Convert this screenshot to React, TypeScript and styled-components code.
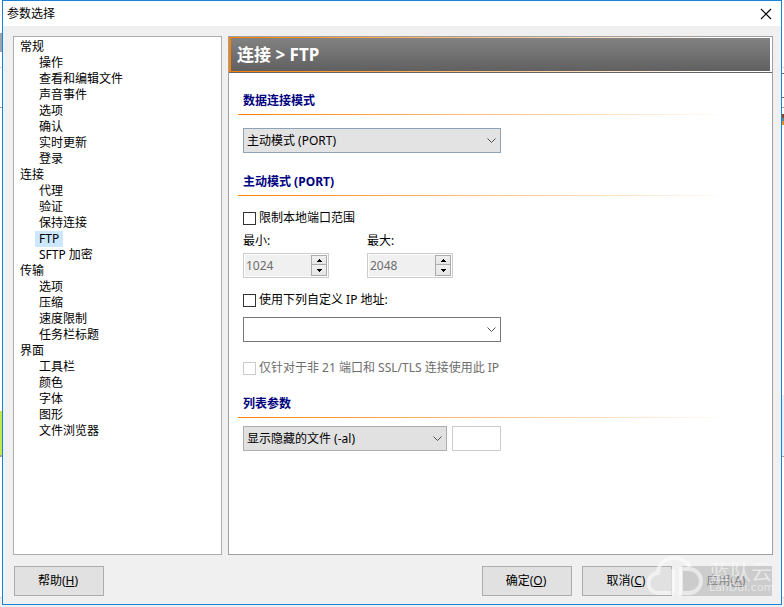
import React, { useState } from "react";
import styled, { createGlobalStyle } from "styled-components";

const Global = createGlobalStyle`
  * { box-sizing: border-box; }
  html, body, #root { height: 100%; margin: 0; }
  body, button, input, select {
    font-family: "Noto Sans", "Noto Sans CJK SC", sans-serif;
    font-size: 12px;
    line-height: 16px;
    color: #000;
  }
  body { background: #fff; overflow: hidden; }
`;

const Desktop = styled.div`
  min-height: 100vh;
  display: grid;
  padding: 0 2px 2px;
  background:
    linear-gradient(
      #fff 33px, #9aa5b0 33px 52px, #fff 52px 67px, #d8d8d8 67px 68px, #fff 68px 107px,
      #a0a0a0 107px 108px, #fff 108px 411px, #c4e84c 411px 455px, #a0a0a0 455px 457px,
      #fff 457px 597px, #d8d8d8 597px 598px, #f0f0f0 598px
    ) left / 2px 100% no-repeat,
    linear-gradient(
      #fff 67px, #d8d8d8 67px 68px, #fff 68px 73px, #707070 73px 74px, #fff 74px 97px,
      #707070 97px 98px, #fff 98px 107px, #a0a0a0 107px 108px, #fff 108px 114px,
      #8a4a20 114px 118px, #5b87a8 118px 121px, #e08a28 121px 125px, #fff 125px 395px,
      #e8f0f8 395px 456px, #a0a0a0 456px 457px, #fff 457px 597px, #d8d8d8 597px 598px, #f0f0f0 598px
    ) right / 2px 100% no-repeat,
    #f0f0f0;
`;

const Dialog = styled.main`
  display: flex;
  flex-direction: column;
  background: #f0f0f0;
  border: 1px solid #1883d7;
`;

const TitleBar = styled.header`
  display: flex;
  align-items: center;
  justify-content: space-between;
  height: 25px;
  padding: 0 7px 0 4px;
  background: #fff;
`;

const Title = styled.h1`
  margin: 0;
  font-size: 12px;
  font-weight: 400;
`;

const CloseButton = styled.button`
  display: grid;
  place-items: center;
  width: 16px;
  height: 16px;
  padding: 0;
  border: 0;
  background: none;
`;

const Body = styled.div`
  flex: 1;
  display: grid;
  grid-template-columns: 209px 1fr;
  gap: 6px;
  padding: 10px 8px 0 10px;
`;

const Sidebar = styled.nav`
  padding: 2px 5px;
  background: #fff;
  border: 1px solid #abadb3;
`;

const Group = styled.div`
  display: flex;
  flex-direction: column;
  align-items: flex-start;
`;

const TreeItem = styled.a<{ $child?: boolean; $active?: boolean }>`
  height: 16px;
  margin-left: ${(p) => (p.$child ? 16 : 0)}px;
  padding: 0 ${(p) => (p.$child ? 4 : 1)}px;
  color: #000;
  text-decoration: none;
  white-space: nowrap;
  background: ${(p) => (p.$active ? "#cce8ff" : "transparent")};
`;

const Panel = styled.section`
  background: #fff;
  border: 1px solid #a0a0a0;
`;

const Banner = styled.div`
  padding: 1px 2px;
  background: linear-gradient(90deg, #ff8000, #fff 90%);
  border-bottom: 1px solid #646464;
`;

const BannerTitle = styled.h2`
  margin: 0;
  padding: 0 6px;
  font-size: 17px;
  line-height: 33px;
  color: #fff;
  background: linear-gradient(#828282, #606060);
`;

const Content = styled.div`
  padding: 20px 9px 0;
`;

const SectionTitle = styled.h3`
  margin: 0;
  padding: 0 5px 5px;
  font-size: 12px;
  line-height: 16px;
  color: #000080;
`;

const Rule = styled.div`
  height: 1px;
  margin-right: 32px;
  background: linear-gradient(90deg, #ff8000, #fff);
`;

const Fields = styled.div<{ $top: number; $bottom: number }>`
  display: flex;
  flex-direction: column;
  align-items: flex-start;
  padding: ${(p) => p.$top}px 5px ${(p) => p.$bottom}px;
`;

const ComboBox = styled.div<{ $width: number }>`
  display: grid;
  align-items: center;
  width: ${(p) => p.$width}px;
  max-width: 100%;
`;

const Select = styled.select<{ $tone: string; $border: string }>`
  grid-area: 1 / 1;
  appearance: none;
  width: 100%;
  height: 25px;
  padding: 0 20px 0 3px;
  border: 1px solid ${(p) => p.$border};
  border-radius: 0;
  background: ${(p) => p.$tone};
`;

const Chevron = styled.svg`
  grid-area: 1 / 1;
  justify-self: end;
  margin-right: 4px;
  pointer-events: none;
`;

const CheckLabel = styled.label<{ $muted?: boolean }>`
  display: flex;
  align-items: center;
  gap: 3px;
  color: ${(p) => (p.$muted ? "#6d6d6d" : "#000")};
`;

const CheckBox = styled.input`
  appearance: none;
  width: 13px;
  height: 13px;
  margin: 0;
  border: 1px solid #333;
  background: #fff;
  &:checked { box-shadow: inset 0 0 0 2px #fff; background: #333; }
  &:disabled { border-color: #ccc; }
`;

const PortRow = styled.div`
  display: flex;
  gap: 38px;
  margin: 7px 0 14px;
`;

const PortField = styled.div`
  display: flex;
  flex-direction: column;
  gap: 4px;
  width: 86px;
`;

const Spinner = styled.div`
  display: grid;
  grid-template-columns: 1fr 16px;
  height: 25px;
  padding: 1px;
  background: #fff;
  border: 1px solid #ccc;
`;

const SpinnerInput = styled.input`
  min-width: 0;
  width: 100%;
  padding: 0 1px;
  border: 0;
  background: #f0f0f0;
  color: #6d6d6d;
`;

const SpinnerButtons = styled.div`
  display: grid;
  grid-template-rows: 10px 11px;
`;

const SpinnerButton = styled.button`
  display: grid;
  place-items: center;
  padding: 0;
  border: 1px solid #acacac;
  background: linear-gradient(#f0f0f0, #e5e5e5);
  & + & { border-top: 0; }
`;

const ListRow = styled.div`
  display: flex;
  gap: 5px;
`;

const TextBox = styled.input`
  width: 49px;
  height: 25px;
  border: 1px solid #ccc;
  background: #fff;
`;

const Gap = styled.div`
  height: 9px;
`;

const Footer = styled.footer`
  display: flex;
  gap: 10px;
  padding: 11px 9px 8px 11px;
`;

const PushButton = styled.button<{ $start?: boolean }>`
  width: 90px;
  height: 30px;
  margin-right: ${(p) => (p.$start ? "auto" : "0")};
  padding: 0 2px 0 0;
  border: 1px solid #adadad;
  background: #e1e1e1;
  &:disabled { border-color: #ccc; background: #ccc; color: #838383; }
`;

const Watermark = styled.div`
  position: absolute;
  right: 11px;
  bottom: 10px;
  display: flex;
  align-items: center;
  gap: 4px;
  color: rgba(255, 255, 255, 0.55);
  pointer-events: none;
`;

const WatermarkText = styled.div`
  display: flex;
  flex-direction: column;
  width: 64px;
`;

const WatermarkName = styled.span`
  font-size: 21px;
  line-height: 22px;
`;

const WatermarkUrl = styled.span`
  font-family: "DejaVu Sans", sans-serif;
  font-size: 11px;
  line-height: 11px;
`;

const groups = [
  { name: "常规", items: ["操作", "查看和编辑文件", "声音事件", "选项", "确认", "实时更新", "登录"] },
  { name: "连接", items: ["代理", "验证", "保持连接", "FTP", "SFTP 加密"] },
  { name: "传输", items: ["选项", "压缩", "速度限制", "任务栏标题"] },
  { name: "界面", items: ["工具栏", "颜色", "字体", "图形", "文件浏览器"] },
];

type ComboProps = { label: string; width: number; options: string[]; tone: string; border: string };

function Combo({ label, width, options, tone, border }: ComboProps) {
  return (
    <ComboBox $width={width}>
      <Select aria-label={label} $tone={tone} $border={border}>
        {options.map((o) => <option key={o}>{o}</option>)}
      </Select>
      <Chevron width="11" height="7" viewBox="0 0 11 7" fill="none" stroke="#505050">
        <path d="M1.5 1.5 5.5 5.5 9.5 1.5" />
      </Chevron>
    </ComboBox>
  );
}

function Port({ id, label, value }: { id: string; label: string; value: string }) {
  return (
    <PortField>
      <label htmlFor={id}>{label}</label>
      <Spinner>
        <SpinnerInput id={id} defaultValue={value} disabled />
        <SpinnerButtons>
          <SpinnerButton disabled aria-label={`${label} +`}>
            <svg width="5" height="3" viewBox="0 0 5 3"><path d="M0 3V2H1V1H2V0H3V1H4V2H5V3z" /></svg>
          </SpinnerButton>
          <SpinnerButton disabled aria-label={`${label} -`}>
            <svg width="5" height="3" viewBox="0 0 5 3"><path d="M0 0V1H1V2H2V3H3V2H4V1H5V0z" /></svg>
          </SpinnerButton>
        </SpinnerButtons>
      </Spinner>
    </PortField>
  );
}

export default function App() {
  const [page, setPage] = useState("连接/FTP");
  return (
    <Desktop>
      <Global />
      <Dialog>
        <TitleBar>
          <Title>参数选择</Title>
          <CloseButton aria-label="关闭">
            <svg width="12" height="12" viewBox="0 0 12 12" stroke="#000" fill="none" strokeWidth="1.2">
              <path d="M1 1 11 11M11 1 1 11" />
            </svg>
          </CloseButton>
        </TitleBar>
        <Body>
          <Sidebar>
            {groups.map((g) => (
              <Group key={g.name}>
                <TreeItem href="#">{g.name}</TreeItem>
                {g.items.map((item) => {
                  const key = `${g.name}/${item}`;
                  return (
                    <TreeItem key={key} href="#" $child $active={page === key} onClick={() => setPage(key)}>
                      {item}
                    </TreeItem>
                  );
                })}
              </Group>
            ))}
          </Sidebar>
          <Panel>
            <Banner>
              <BannerTitle>连接 &gt; FTP</BannerTitle>
            </Banner>
            <Content>
              <SectionTitle>数据连接模式</SectionTitle>
              <Rule />
              <Fields $top={13} $bottom={21}>
                <Combo label="数据连接模式" width={258} options={["主动模式 (PORT)"]} tone="#e3e3e3" border="#8fa3b7" />
              </Fields>
              <SectionTitle>主动模式 (PORT)</SectionTitle>
              <Rule />
              <Fields $top={14} $bottom={20}>
                <CheckLabel><CheckBox type="checkbox" />限制本地端口范围</CheckLabel>
                <PortRow>
                  <Port id="port-min" label="最小:" value="1024" />
                  <Port id="port-max" label="最大:" value="2048" />
                </PortRow>
                <CheckLabel><CheckBox type="checkbox" />使用下列自定义 IP 地址:</CheckLabel>
                <Gap />
                <Combo label="自定义 IP 地址" width={258} options={[""]} tone="#fff" border="#7a7a7a" />
                <Gap />
                <Gap />
                <CheckLabel $muted><CheckBox type="checkbox" disabled />仅针对于非 21 端口和 SSL/TLS 连接使用此 IP</CheckLabel>
              </Fields>
              <SectionTitle>列表参数</SectionTitle>
              <Rule />
              <Fields $top={8} $bottom={0}>
                <ListRow>
                  <Combo label="列表参数" width={204} options={["显示隐藏的文件 (-al)"]} tone="#e1e1e1" border="#adadad" />
                  <TextBox aria-label="参数" />
                </ListRow>
              </Fields>
            </Content>
          </Panel>
        </Body>
        <Footer>
          <PushButton $start>帮助(<u>H</u>)</PushButton>
          <PushButton>确定(<u>O</u>)</PushButton>
          <PushButton>取消(<u>C</u>)</PushButton>
          <PushButton disabled>应用(<u>A</u>)</PushButton>
        </Footer>
      </Dialog>
      <Watermark>
        <svg width="58" height="42" viewBox="0 0 58 42" fill="none" stroke="currentColor" strokeWidth="4">
          <path d="M26 38H12A10 10 0 0 1 11 18C11 9 18 3 27 3C35 3 41 7 43 12M26 14V38M34 14V38H42A12 12 0 0 0 42 14z" />
        </svg>
        <WatermarkText>
          <WatermarkName>蓝队云</WatermarkName>
          <WatermarkUrl>LanDui.com</WatermarkUrl>
        </WatermarkText>
      </Watermark>
    </Desktop>
  );
}
